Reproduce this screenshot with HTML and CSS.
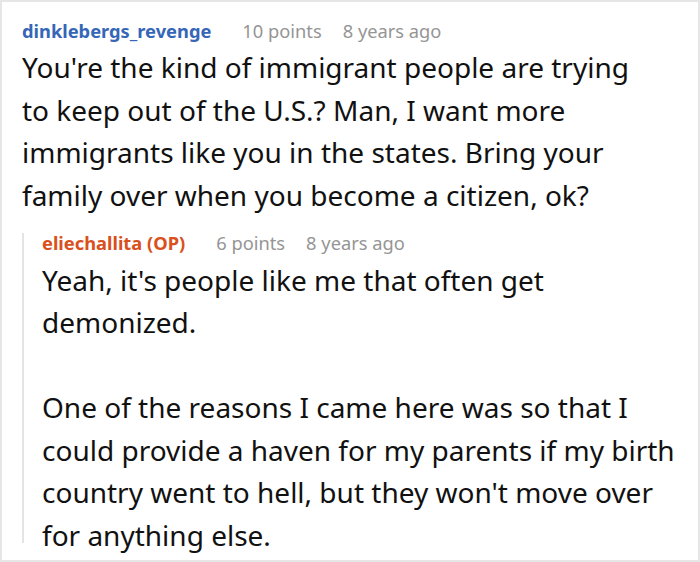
FILE: index.html
```html
<!DOCTYPE html>
<html>
<head>
<meta charset="utf-8">
<link rel="stylesheet" href="styles.css">
</head>
<body>
<div class="thread">
  <div class="comment">
    <div class="meta">
      <span class="user">dinklebergs_revenge</span>
      <span class="info">10 points</span>
      <span class="info">8 years ago</span>
    </div>
    <p class="text">You're the kind of immigrant people are trying<br>to keep out of the U.S.? Man, I want more<br>immigrants like you in the states. Bring your<br>family over when you become a citizen, ok?</p>
    <div class="reply">
      <div class="meta">
        <span class="user op">eliechallita (OP)</span>
        <span class="info">6 points</span>
        <span class="info">8 years ago</span>
      </div>
      <p class="text">Yeah, it's people like me that often get<br>demonized.</p>
      <p class="text">One of the reasons I came here was so that I<br>could provide a haven for my parents if my birth<br>country went to hell, but they won't move over<br>for anything else.</p>
    </div>
  </div>
</div>
</body>
</html>
```
FILE: styles.css
```css
html, body {
  margin: 0;
  padding: 0;
  background: #fff;
}

.thread {
  width: 700px;
  height: 562px;
  box-sizing: border-box;
  border: 2px solid #e6e6e6;
  overflow: hidden;
  font-family: "Noto Sans", "Open Sans", sans-serif;
  color: #111;
}

.comment {
  padding: 16px 0 0 20px;
}

.meta {
  display: flex;
  gap: 21px;
  font-size: 18.3px;
  line-height: 26px;
}

.user {
  font-weight: 700;
  color: #3566b8;
  margin-right: 10px;
}

.user.op {
  color: #d9501c;
}

.info {
  color: #959595;
}

.text {
  margin: 2px 0 0;
  font-size: 28px;
  line-height: 42.5px;
  white-space: nowrap;
}

.reply {
  display: flow-root;
  margin-top: 17px;
  padding-left: 18px;
  border-left: 2px solid #e4e4e4;
}

.reply .meta {
  line-height: 20px;
}

.reply .text {
  margin-top: 5.5px;
}

.reply .text + .text {
  margin-top: 42.5px;
}

/* the thread line stops at the last baseline */
.reply .text:last-child {
  margin-bottom: -13px;
}
```
